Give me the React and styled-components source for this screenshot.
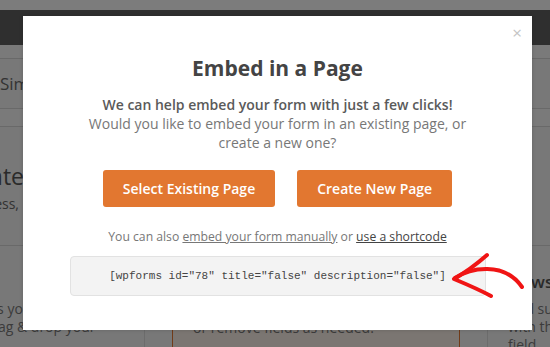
import React from 'react'
import styled, { createGlobalStyle } from 'styled-components'

const GlobalStyle = createGlobalStyle`
  html, body {
    margin: 0;
    padding: 0;
  }
  body {
    width: 550px;
    height: 347px;
    overflow: hidden;
    background: #eeeeee;
    font-family: "Open Sans", "Liberation Sans", sans-serif;
  }
`

function App() {
    return (
        <Page>
            <GlobalStyle />
            <TopStrip />
            <Toolbar />
            <Band />
            <Tabs>
                <Tab>Simple Contact Form</Tab>
            </Tabs>
            <Band small />
            <Intro>
                <IntroTitle width={24}><span>Select a Template</span></IntroTitle>
                <IntroText width={19}><span>To speed up the process,</span></IntroText>
            </Intro>
            <Cards>
                <Card>
                    <CardTitle>Blank Form</CardTitle>
                    <CardText>The blank form lets you create any type of form, or drag &amp; drop your own fields.</CardText>
                </Card>
                <Card active>
                    <CardTitle>Simple Contact Form</CardTitle>
                    <CardText>Start from a basic contact form. Add or remove fields as needed.</CardText>
                </Card>
                <Card>
                    <CardTitle>Newsletter Signup Form</CardTitle>
                    <CardText>Add subscribers and grow your list with this form. You can add another field.</CardText>
                </Card>
            </Cards>

            <Overlay>
                <Modal>
                    <Close>×</Close>
                    <Title>Embed in a Page</Title>
                    <Lead>
                        <strong>We can help embed your form with just a few clicks!</strong>
                        <br />
                        Would you like to embed your form in an existing page, or
                        <br />
                        create a new one?
                    </Lead>
                    <Buttons>
                        <Button>Select Existing Page</Button>
                        <Button>Create New Page</Button>
                    </Buttons>
                    <Also>
                        You can also <Link>embed your form manually</Link> or <Link dark>use a shortcode</Link>
                    </Also>
                    <Shortcode>[wpforms id="78" title="false" description="false"]</Shortcode>
                </Modal>
                <Arrow viewBox="0 0 82 54" width="82" height="54">
                    <path d="M7 30 C22 20, 56 13, 74 39" />
                    <path d="M39 7 C30 15, 18 24, 6 31 C18 36, 30 41, 43 48" />
                </Arrow>
            </Overlay>
        </Page>
    )
}

export default App

const Page = styled.div`
    position: relative;
    width: 550px;
    height: 347px;
    overflow: hidden;
    display: flex;
    flex-direction: column;
    background: #f0f0f0;
`

const TopStrip = styled.div`
    height: 10px;
    background: #f8f8f8;
    flex-shrink: 0;
`

const Toolbar = styled.div`
    height: 35px;
    background: #5e5e5e;
    flex-shrink: 0;
`

const Band = styled.div`
    height: ${p => (p.small ? 17 : 13)}px;
    border-bottom: 1px solid #d2d2d2;
    background: #f4f4f4;
    flex-shrink: 0;
`

const Tabs = styled.div`
    height: 49px;
    border-bottom: 1px solid #d2d2d2;
    display: flex;
    align-items: center;
    flex-shrink: 0;
`

const Tab = styled.div`
    font-size: 17px;
    color: #666;
    white-space: nowrap;
`

const Intro = styled.div`
    height: 119px;
    border-bottom: 1px solid #d2d2d2;
    padding-top: 32px;
    box-sizing: border-box;
    flex-shrink: 0;
    white-space: nowrap;
`

const IntroTitle = styled.div`
    width: ${p => p.width}px;
    display: flex;
    justify-content: flex-end;
    font-size: 23px;
    line-height: 34px;
    color: #555;
`

const IntroText = styled.div`
    width: ${p => p.width}px;
    display: flex;
    justify-content: flex-end;
    margin-top: 1px;
    font-size: 14px;
    line-height: 19px;
    color: #666;
`

const Cards = styled.div`
    display: flex;
    gap: 27px;
    margin-left: -143px;
    padding-top: 24px;
`

const Card = styled.div`
    width: 288px;
    flex-shrink: 0;
    height: 120px;
    box-sizing: border-box;
    padding: 0 20px;
    background: ${p => (p.active ? '#f6ece4' : 'transparent')};
    border: 1px solid ${p => (p.active ? '#e27730' : '#d8d8d8')};
    border-width: ${p => (p.active ? '1px' : '0 1px')};
`

const CardTitle = styled.div`
    font-size: 17px;
    font-weight: 600;
    color: #555;
    line-height: 24px;
`

const CardText = styled.div`
    margin-top: 6px;
    font-size: 14px;
    line-height: 18px;
    color: #777;
`

const Overlay = styled.div`
    position: absolute;
    inset: 0;
    background: rgba(0, 0, 0, 0.5);
`

const Modal = styled.div`
    position: absolute;
    left: 23px;
    top: 16px;
    width: 509px;
    height: 314px;
    box-sizing: border-box;
    padding-top: 37px;
    background: #fff;
    display: flex;
    flex-direction: column;
    align-items: center;
    box-shadow: 0 0 4px rgba(0, 0, 0, 0.15);
`

const Close = styled.div`
    position: absolute;
    top: 7px;
    right: 10px;
    font-size: 17px;
    line-height: 20px;
    color: #c4c4c4;
`

const Title = styled.h2`
    margin: 0;
    font-size: 21px;
    line-height: 30px;
    font-weight: 700;
    color: #444;
`

const Lead = styled.p`
    margin: 12px 0 0;
    font-size: 14px;
    line-height: 19px;
    color: #777;
    text-align: center;

    strong {
        font-weight: 600;
        color: #5a5a5a;
    }
`

const Buttons = styled.div`
    display: flex;
    gap: 22px;
    margin-top: 18px;
`

const Button = styled.button`
    height: 37px;
    padding: 0 20px;
    border: none;
    border-radius: 3px;
    background: #e27730;
    color: #fff;
    font-family: inherit;
    font-size: 14px;
    font-weight: 600;
    cursor: pointer;
`

const Also = styled.div`
    margin-top: 20px;
    font-size: 12.2px;
    line-height: 19px;
    color: #777;
`

const Link = styled.a`
    color: ${p => (p.dark ? '#444' : '#777')};
    text-decoration: underline;
    cursor: pointer;
`

const Shortcode = styled.div`
    margin-top: 10px;
    width: 416px;
    height: 40px;
    box-sizing: border-box;
    display: flex;
    align-items: center;
    justify-content: center;
    background: #f3f3f3;
    border: 1px solid #e2e2e2;
    border-radius: 4px;
    font-family: "Liberation Mono", monospace;
    font-size: 11px;
    color: #444;
`

const Arrow = styled.svg`
    position: absolute;
    left: 448px;
    top: 248px;
    fill: none;
    stroke: #f01414;
    stroke-width: 4;
    stroke-linecap: round;
    stroke-linejoin: round;
`
